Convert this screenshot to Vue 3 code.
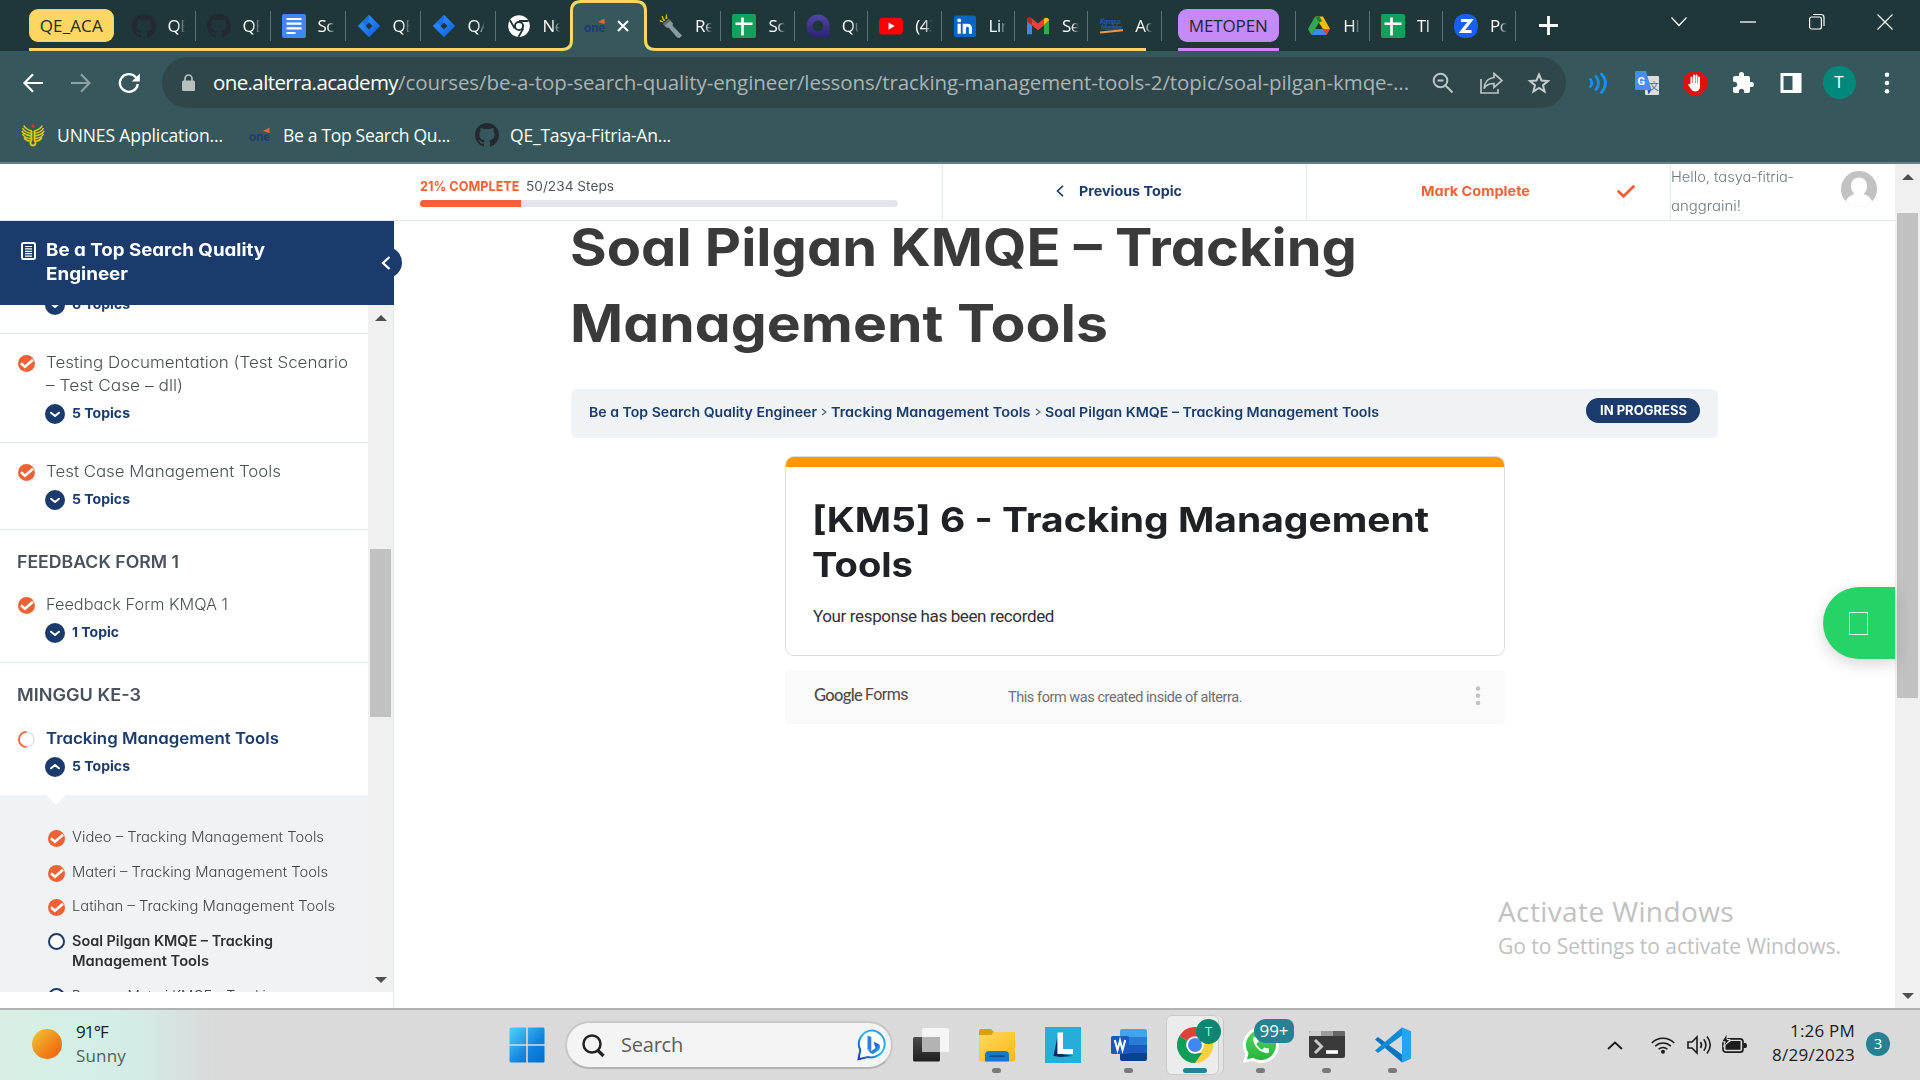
<script setup>
// Fits a line of text to a given width: by letter spacing, or with .wide by widening the glyphs.
const vFit = {
  mounted(el, { value, modifiers }) {
    const natural = el.getBoundingClientRect().width
    const count = el.textContent.length
    if (!count || !value || !natural) return
    if (modifiers.wide) {
      el.style.width = value + 'px'
      el.style.transformOrigin = '0 50%'
      el.style.transform = `scaleX(${value / natural})`
    } else {
      el.style.letterSpacing = (value - natural) / count + 'px'
    }
  },
}

const leftTabs = [
  { icon: 'github', text: 'QE_' },
  { icon: 'github', text: 'QE_' },
  { icon: 'docs', text: 'Scr' },
  { icon: 'jira', text: 'QE' },
  { icon: 'jira', text: 'QA' },
  { icon: 'chromemono', text: 'Ne' },
]
const midTabs = [
  { icon: 'torch', text: 'Re' },
  { icon: 'sheets', text: 'Sc' },
  { icon: 'qmark', text: 'Qu' },
  { icon: 'youtube', text: '(43' },
  { icon: 'linkedin', text: 'Lin' },
  { icon: 'gmail', text: 'Se' },
  { icon: 'kampus', text: 'Ac' },
]
const rightTabs = [
  { icon: 'drive', text: 'HI' },
  { icon: 'sheets', text: 'TI' },
  { icon: 'zoom', text: 'Po' },
]
const bookmarks = [
  { icon: 'unnes', text: 'UNNES Application...', w: 166 },
  { icon: 'one', text: 'Be a Top Search Qu...', w: 167 },
  { icon: 'github', text: 'QE_Tasya-Fitria-An...', w: 161 },
]
const topics = [
  { text: 'Video – Tracking Management Tools', w: 252 },
  { text: 'Materi – Tracking Management Tools', w: 256 },
  { text: 'Latihan – Tracking Management Tools', w: 263 },
]
const apps = [
  { icon: 'taskview' },
  { icon: 'folder', run: true },
  { icon: 'lapp' },
  { icon: 'word', run: true },
  { icon: 'chrome', active: true },
  { icon: 'whatsapp', run: true, badge: '99+' },
  { icon: 'terminal', run: true },
  { icon: 'vscode', run: true },
]
</script>

<template>
  <svg class="defs" width="0" height="0" aria-hidden="true">
    <defs>
      <linearGradient id="gSun" x1="0" y1="0" x2="1" y2="1"><stop offset=".1" stop-color="#efbe35" /><stop offset=".8" stop-color="#f26c0c" /></linearGradient>
      <linearGradient id="gWin" x1="0" y1="0" x2="1" y2="1"><stop offset="0" stop-color="#4fd3ff" /><stop offset=".6" stop-color="#1283dc" /><stop offset="1" stop-color="#0070cf" /></linearGradient>
      <linearGradient id="gBing" x1="1" y1="0" x2="0" y2="1"><stop offset="0" stop-color="#2f8fee" /><stop offset=".45" stop-color="#27bdf0" /><stop offset="1" stop-color="#1338b8" /></linearGradient>
      <linearGradient id="gB" x1="0" y1="0" x2="1" y2="1"><stop offset="0" stop-color="#2f8af0" /><stop offset=".5" stop-color="#1d63dd" /><stop offset="1" stop-color="#35d9e8" /></linearGradient>
      <linearGradient id="gFold" x1="0" y1="0" x2="1" y2="1"><stop offset="0" stop-color="#ffd863" /><stop offset="1" stop-color="#fcb913" /></linearGradient>
      <linearGradient id="gDark" x1="0" y1="0" x2="0" y2="1"><stop offset="0" stop-color="#4b4b4b" /><stop offset="1" stop-color="#1f1f1f" /></linearGradient>
      <linearGradient id="gQ" x1="0" y1="0" x2="0" y2="1"><stop offset="0" stop-color="#5246a8" /><stop offset="1" stop-color="#2b2273" /></linearGradient>
      <linearGradient id="gJ" x1="0" y1="0" x2="1" y2="1"><stop offset=".4" stop-color="#2684ff" /><stop offset="1" stop-color="#0d57cf" /></linearGradient>
      <linearGradient id="gWa" x1="0" y1="0" x2="0" y2="1"><stop offset="0" stop-color="#56d365" /><stop offset="1" stop-color="#25b63c" /></linearGradient>
    </defs>
    <symbol id="github" viewBox="0 0 16 16"><path fill="#24292f" d="M8 0C3.58 0 0 3.58 0 8c0 3.54 2.29 6.53 5.47 7.59.4.07.55-.17.55-.38 0-.19-.01-.82-.01-1.49-2.01.37-2.53-.49-2.69-.94-.09-.23-.48-.94-.82-1.13-.28-.15-.68-.52-.01-.53.63-.01 1.08.58 1.23.82.72 1.21 1.87.87 2.33.66.07-.52.28-.87.51-1.07-1.78-.2-3.64-.89-3.64-3.95 0-.87.31-1.59.82-2.15-.08-.2-.36-1.02.08-2.12 0 0 .67-.21 2.2.82a7.4 7.4 0 0 1 4 0c1.53-1.04 2.2-.82 2.2-.82.44 1.1.16 1.92.08 2.12.51.56.82 1.27.82 2.15 0 3.07-1.87 3.75-3.65 3.95.29.25.54.73.54 1.48 0 1.07-.01 1.93-.01 2.2 0 .21.15.46.55.38A8 8 0 0 0 16 8c0-4.42-3.58-8-8-8z" /></symbol>
    <symbol id="docs" viewBox="0 0 24 24"><rect width="24" height="24" rx="2" fill="#4285f4" /><path stroke="#fff" stroke-width="2.2" d="M4.500 5h15M4.500 9.700h15M4.500 14.400h15M4.500 19h9" /></symbol>
    <symbol id="jira" viewBox="0 0 24 24"><path fill="url(#gJ)" d="M12 .8 23.200 12 12 23.200.8 12z" /><path fill="#203739" d="M12 8.500 15.500 12 12 15.500 8.500 12z" /><path fill="#0d57cf" opacity=".5" d="M12 .8v4.500c-1.500 2-1.500 3 0 4L8.500 12 5 8z" /></symbol>
    <symbol id="chromemono" viewBox="0 0 24 24"><circle cx="12" cy="12" r="10.800" fill="#fff" /><circle cx="12" cy="12" r="4.100" fill="#fff" stroke="#203739" stroke-width="2" /><path d="M12 7h9.500M7.700 14.500 3 6.300M16.300 14.500 11.500 22.800" stroke="#203739" stroke-width="1.800" /></symbol>
    <symbol id="one" viewBox="0 0 24 24"><text x="1" y="17.500" font-family="Lato, sans-serif" font-weight="900" font-size="12.500" fill="#1f3c72">one</text><path fill="#f0643c" d="m15 8 6.500-3.500V10z" /><path d="M4 20h4" stroke="#32546b" stroke-width="1" /></symbol>
    <symbol id="torch" viewBox="0 0 24 24"><path fill="#8a98a2" d="m4 10 6-5 4 4.500-.500 2L23 21.500 20.500 24 18 23.500 10 14l-2.500-.500z" /><path fill="#5d6d78" d="m4 10 6-5 1.500 1.700-6 5z" /><path fill="#e9b32f" d="M1 6.200 4.200 8l-3.200-.6zM3 2l3 4.500L4.200 6.300zM7.500.5 8 4.700 6.700 4.500z" stroke="#e9b32f" stroke-width=".7" /></symbol>
    <symbol id="sheets" viewBox="0 0 24 24"><rect width="24" height="24" rx="2" fill="#12a05c" /><path stroke="#fff" stroke-width="2.600" d="M3.500 9.800h17M10.500 3.500v18" /></symbol>
    <symbol id="qmark" viewBox="0 0 24 24"><path fill="url(#gQ)" fill-rule="evenodd" d="M12 .5a11.500 11.500 0 0 1 11.500 11.500v11.500H12A11.500 11.500 0 0 1 12 .5zM12 6.500a5.500 5.500 0 1 0 0 11 5.500 5.500 0 0 0 0-11z" /></symbol>
    <symbol id="youtube" viewBox="0 0 24 24"><rect y="3.800" width="24" height="16.600" rx="4" fill="#f00" /><path fill="#fff" d="M9.500 8.500v7.200l6.200-3.600z" /></symbol>
    <symbol id="linkedin" viewBox="0 0 24 24"><rect x="1" y="1.500" width="22" height="21.500" rx="2" fill="#0a66c2" /><path stroke="#fff" stroke-width="3.200" d="M6.200 9.800v10M11.300 9.800v10" /><circle cx="6.200" cy="6.400" r="1.900" fill="#fff" /><path d="M11.300 14.500q0-3.300 3.200-3.300 2.900 0 2.900 3.300v5.300" fill="none" stroke="#fff" stroke-width="3" /></symbol>
    <symbol id="gmail" viewBox="0 0 24 24"><path fill="#4285f4" d="M1 7v13.200h5V11z" /><path fill="#34a853" d="M23 7v13.200h-5V11z" /><path fill="#ea4335" d="M1 6c0-2.500 3-3 4.500-1.800L12 9.500l6.500-5.300V11L12 16.200 1 7.500z" /><path fill="#fbbc04" d="M18 4.500C20 3 23 3.500 23 6.500L18 11z" /><path fill="#c5221f" d="M1 6.500c0-2.500 2.500-3.500 5-1.800V11L1 7.500z" /></symbol>
    <symbol id="kampus" viewBox="0 0 24 24"><text x="1" y="10" font-family="Lato, sans-serif" font-weight="700" font-style="italic" font-size="7" textLength="21" fill="#1c5da8">Kampus</text><text x="2" y="15.500" font-family="Lato, sans-serif" font-weight="700" font-style="italic" font-size="6.500" textLength="21" fill="#1c5da8">Merdeka</text><path d="M1 18.500 24 16.300" stroke="#e99b50" stroke-width="2" /></symbol>
    <symbol id="drive" viewBox="0 0 24 24"><path fill="#34a853" d="M8 2.500 1 15l3.500 6L12 8.500z" /><path fill="#fbbc04" d="M8 2.500h8L23 15h-7z" /><path fill="#4285f4" d="M7.800 15H16l4 6H4.500z" /><path fill="#ea4335" d="M16 15h7l-3.400 6z" /><path fill="#188038" d="m8 2.500 4 6.300L15 7 12.500 2.500z" /></symbol>
    <symbol id="zoom" viewBox="0 0 24 24"><rect width="24" height="24" rx="10.500" fill="#1660f5" /><path d="M7 6.500h9.500L8 17.500h9.500" fill="none" stroke="#fff" stroke-width="3.200" /></symbol>
    <symbol id="unnes" viewBox="0 0 24 24"><g fill="none" stroke="#dcc90e" stroke-width="1.500"><path d="M11 8C7 7 4 5.500 2.800 2.500M10.800 10.500C6 10 3 8 1.500 5M10.500 13C6 12.500 2.500 10.500.8 8M10 15.500c-4 0-7-1.500-8.500-4.500M9.500 18C7 18 4.500 17 3 14.500M13 8c4-1 7-2.500 8.200-5.500M13.200 10.500C18 10 21 8 22.500 5M13.500 13c4.500-.500 8-2.500 9.700-5M14 15.500c4 0 7-1.500 8.500-4.500M14.500 18c2.500 0 5-1 6.500-3.500" /><path stroke-width="1.900" d="M10.500 8v9c-2 3-1 5.500 1.500 5.500s3.500-2.500 1.500-5.500V8" /></g><circle cx="12" cy="2.800" r="1.600" fill="#e33" /></symbol>
    <symbol id="taskview" viewBox="0 0 36 36"><rect x="0" y="10" width="27" height="24.500" rx="1.500" fill="url(#gDark)" /><rect x="9" y="1" width="27" height="24" rx="1.500" fill="#fbfbfb" opacity=".8" /><path fill="#b3b3b3" d="M9 10h18v15H10.500Q9 25 9 23.500z" /></symbol>
    <symbol id="folder" viewBox="0 0 36 36"><path fill="#dd9f06" d="M0 4q0-2 2-2h10l3 3v6H0z" /><path fill="url(#gFold)" d="M0 8h12l3-3h20q1 0 1 1v27q0 1.500-1.500 1.500h-33Q0 34.500 0 33z" /><path fill="#1279cf" d="M6 34.500V28q0-4 4-4h16q4 0 4 4v6.500z" /><path d="M11 29.200h14" stroke="#0b4d92" stroke-width="1.800" stroke-linecap="round" /></symbol>
    <symbol id="lapp" viewBox="0 0 36 36"><path fill="#25aeda" d="M0 0h36v36H0z" /><path fill="#0e2c5d" d="m12.500 9-4 20 7 1 12-1-15-3z" /><path fill="#fff" d="M12.500 5.500H18V22h10v5H12.500z" /></symbol>
    <symbol id="word" viewBox="0 0 36 36"><path fill="#41a5ee" d="M9 4q0-2 2-2h23q2 0 2 2v6H9z" /><path fill="#2b7cd3" d="M9 10h27v8H9z" /><path fill="#185abd" d="M9 18h27v8H9z" /><path fill="#103f91" d="M9 26h27v6q0 2-2 2H11q-2 0-2-2z" /><rect y="9" width="18" height="18" rx="1.500" fill="#185abd" /><path d="m3.800 13 2.700 10L9 13.500 11.500 23l2.700-10" fill="none" stroke="#fff" stroke-width="2" /></symbol>
    <symbol id="chrome" viewBox="0 0 36 36"><path fill="#db4437" d="M18 18 2.400 9A18 18 0 0 1 33.600 9z" /><path fill="#0f9d58" d="M18 18v18A18 18 0 0 1 2.400 9z" /><path fill="#ffcd40" d="M18 10h16.100A18 18 0 0 1 18 36l7-14z" /><path fill="#0f9d58" d="m11 22 7 4h7l-7 10-5-1z" /><circle cx="18" cy="18" r="8.800" fill="#fff" /><circle cx="18" cy="18" r="7" fill="#4285f4" /></symbol>
    <symbol id="whatsapp" viewBox="0 0 36 36"><path fill="#fff" d="M18 0a18 18 0 1 1-8.600 33.800L0 36l2.300-9.200A18 18 0 0 1 18 0z" /><path fill="url(#gWa)" d="M18 3a15 15 0 1 1-8 27.700L4 32.300l1.500-6A15 15 0 0 1 18 3z" /><path fill="#fff" transform="translate(7.500 7.500) scale(.88)" d="M6.620 10.790c1.440 2.830 3.760 5.140 6.590 6.590l2.200-2.200c.27-.27.67-.36 1.020-.24 1.120.37 2.330.57 3.570.57.550 0 1 .45 1 1V20c0 .55-.45 1-1 1-9.390 0-17-7.610-17-17 0-.55.45-1 1-1h3.500c.55 0 1 .45 1 1 0 1.250.2 2.450.57 3.570.11.35.03.74-.25 1.020z" /></symbol>
    <symbol id="terminal" viewBox="0 0 36 36"><rect y="4" width="36" height="27" rx="2" fill="#3a3a3a" /><path fill="#cfcfcf" d="M0 9V6q0-2 2-2h10v5z" /><path fill="#9d9d9d" d="M12 4h12v5H12z" /><path fill="#666" d="M24 4h10q2 0 2 2v3H24z" /><path d="m6 13 6.500 6.500L6 26" fill="none" stroke="#c9c9c9" stroke-width="3" /><path d="M17 25h12" stroke="#fff" stroke-width="3.600" /></symbol>
    <symbol id="vscode" viewBox="0 0 36 36"><path fill="#0b74c0" d="m0 12.500 3-2.500 24 17.500v8z" /><path fill="#0f8ad6" d="m0 23.500 3 2.500L27 8.500V.5z" /><path fill="#27a3f2" d="m27 .3 9 4v27.400l-9 4z" /></symbol>
    <symbol id="check" viewBox="0 0 17 17"><circle cx="8.500" cy="8.500" r="8.500" fill="#f06235" /><path d="m3 8.300 3.900 3.500L15 4.700" fill="none" stroke="#fff" stroke-width="2.600" /></symbol>
    <symbol id="down" viewBox="0 0 20 20"><circle cx="10" cy="10" r="10" fill="#1b3b6c" /><path d="m6 8.700 4 3.300 4-3.300" fill="none" stroke="#fff" stroke-width="2" stroke-linecap="round" stroke-linejoin="round" /></symbol>
  </svg>

  <div class="screen">
    <header class="tabs">
      <svg class="outline" width="1920" height="51">
        <path fill="#36585c" d="M560 51q11-1 11-10V11q0-9 9-9h57q9 0 9 9v30q0 9 10 10z" />
        <path fill="none" stroke="#fdd663" stroke-width="3" d="M29 49.500H562q9.500 0 9.500-9.500V11q0-9.500 9.500-9.500h55q9.500 0 9.500 9.500V40q0 9.500 9.500 9.500H1146" />
        <path stroke="#c58af9" stroke-width="3" d="M1178 49.500h101" />
      </svg>
      <div class="chip yellow"><span v-fit="63">QE_ACA</span></div>
      <div v-for="(t, i) in leftTabs" :key="'l' + i" class="tab" :class="{ last: i === 5 }">
        <svg class="fav"><use :href="'#' + t.icon" /></svg><span class="tt">{{ t.text }}</span>
      </div>
      <div class="tab active">
        <svg class="fav"><use href="#one" /></svg>
        <svg class="x" width="12" height="12"><path d="m1 1 10 10M11 1 1 11" stroke="#fff" stroke-width="2" /></svg>
      </div>
      <div v-for="(t, i) in midTabs" :key="'m' + i" class="tab slim">
        <svg class="fav"><use :href="'#' + t.icon" /></svg><span class="tt">{{ t.text }}</span>
      </div>
      <div class="chip purple"><span v-fit="79">METOPEN</span></div>
      <i class="sep"></i>
      <div v-for="(t, i) in rightTabs" :key="'r' + i" class="tab slim">
        <svg class="fav"><use :href="'#' + t.icon" /></svg><span class="tt">{{ t.text }}</span>
      </div>
      <svg class="plus" width="19" height="19"><path d="M9.500 0v19M0 9.500h19" stroke="#fff" stroke-width="2.800" /></svg>
      <div class="wins">
        <svg width="16" height="18" fill="none" stroke="#fff" stroke-width="1.200"><path d="m.5 4.500 7.500 8 7.500-8" /></svg>
        <svg width="16" height="18" fill="none" stroke="#fff" stroke-width="1.300"><path d="M0 9h16" /></svg>
        <svg width="16" height="18" fill="none" stroke="#fff" stroke-width="1.200"><rect x=".6" y="4" width="11.800" height="12" rx="2" /><path d="M4 1.500h8q3 0 3 3v8.500" /></svg>
        <svg width="16" height="18" fill="none" stroke="#fff" stroke-width="1.200"><path d="m.5 1.500 15 15M15.500 1.500l-15 15" /></svg>
      </div>
    </header>

    <div class="toolbar">
      <svg width="20" height="20" fill="none" stroke="#fff" stroke-width="2.200"><path d="M20 10H2M10 1.200 1.500 10l8.500 8.800" /></svg>
      <svg width="20" height="20" fill="none" stroke="#8fa3a5" stroke-width="2"><path d="M0 10h18M10 1.200l8.500 8.800-8.500 8.800" /></svg>
      <svg width="22" height="22" fill="none" stroke="#fff" stroke-width="2.300"><path d="M18.800 12A9 8.800 0 1 1 16.500 5L19 7.500" /><path d="M20.800 1.500v8h-8z" fill="#fff" stroke="none" /></svg>
      <div class="omni">
        <svg class="lock" width="13" height="17"><path d="M3 8V4.500a3.500 3.500 0 0 1 7 0V8" fill="none" stroke="#b7bfc1" stroke-width="1.700" /><rect y="6.500" width="13" height="10.500" rx="1.500" fill="#b7bfc1" /></svg>
        <span v-fit="185" class="dom">one.alterra.academy</span><span v-fit="1011" class="path">/courses/be-a-top-search-quality-engineer/lessons/tracking-management-tools-2/topic/soal-pilgan-kmqe-...</span>
        <div class="omni-icons">
          <svg width="22" height="22" fill="none" stroke="#bcc4c5" stroke-width="2"><circle cx="8.500" cy="8.500" r="6.800" /><path d="M5.500 8.500h6M13.500 13.500l7 7" /></svg>
          <svg width="24" height="24" fill="none" stroke="#bcc4c5" stroke-width="1.700"><path d="M2 8v14h17v-4" /><path d="M15 2.500 23 9.500l-8 7v-4c-5 0-8 1.500-10 5 .5-6 4-10.500 10-11z" /></svg>
          <svg width="22" height="22" fill="none" stroke="#c6cdce" stroke-width="2"><path d="m11 2.500 2.500 6 6.500.5-5 4.200 1.600 6.300L11 16l-5.600 3.500L7 13.200 2 9l6.500-.5z" /></svg>
        </div>
      </div>
      <div class="exts">
        <svg width="24" height="24" fill="none" stroke="#1590f5" stroke-width="2.800" stroke-linecap="round"><path d="M3.500 8.500q2.500 3.500 0 7M9 5.500q5 6.500 0 13M14.500 3q8 9 0 18.500" /></svg>
        <svg width="24" height="24"><rect x="10" y="5" width="14" height="19" rx="1" fill="#dcdfe2" /><path fill="#4c8bf5" d="M0 1.500Q0 0 1.500 0H11l5.500 19H1.500Q0 19 0 17.500z" /><path fill="#2c4fc0" d="M12.500 19h4l-3 4.500z" /><text x="2.500" y="14" font-size="11" font-weight="700" font-family="Roboto, sans-serif" fill="#fff">G</text><text x="14" y="19" font-size="10" font-family="'Noto Sans CJK SC', sans-serif" fill="#54707a">文</text></svg>
        <svg width="24" height="24"><path fill="#e20f0f" d="M7 0h10l7 7v10l-7 7H7l-7-7V7z" /><path d="M8.500 14V6.500M11 13V4.500M13.500 13V4.500M16 13V6.500" stroke="#fff" stroke-width="2" stroke-linecap="round" /><path fill="#fff" d="M7.500 12H17v3q0 5-4.500 5.500-3 0-4.500-2.500L5 13.500q1-1 2.500.5z" /></svg>
        <svg width="24" height="24" viewBox="0 0 24 24"><path fill="#fff" d="M20.500 11H19V7c0-1.100-.9-2-2-2h-4V3.500a2.500 2.500 0 0 0-5 0V5H4c-1.100 0-1.990.9-1.990 2v3.800H3.500c1.490 0 2.700 1.210 2.700 2.700s-1.210 2.700-2.700 2.700H2V20c0 1.100.9 2 2 2h3.800v-1.500c0-1.490 1.210-2.700 2.700-2.700s2.700 1.210 2.700 2.700V22H17c1.100 0 2-.9 2-2v-4h1.500a2.500 2.500 0 0 0 0-5z" /></svg>
        <svg width="24" height="24"><path fill="#fff" fill-rule="evenodd" d="M1.500 2h21v20h-21zM4.500 5v14h9V5z" /></svg>
        <div class="profile">T</div>
        <svg width="24" height="24" fill="#fff"><circle cx="12" cy="3.800" r="2.300" /><circle cx="12" cy="12" r="2.300" /><circle cx="12" cy="20.200" r="2.300" /></svg>
      </div>
    </div>

    <nav class="marks">
      <div v-for="b in bookmarks" :key="b.text" class="mark">
        <svg class="fav"><use :href="'#' + b.icon" /></svg><span v-fit="b.w">{{ b.text }}</span>
      </div>
    </nav>

    <div class="page">
      <div class="view">
        <div class="top">
          <div class="prog">
            <div class="steps"><b v-fit.wide="99.5">21% COMPLETE</b><span v-fit.wide="88">50/234 Steps</span></div>
            <div class="bar"><div class="fill"></div></div>
          </div>
          <div class="cell prev">
            <svg width="8" height="12"><path d="M7 .8 1.500 6 7 11.200" fill="none" stroke="#1b3b6c" stroke-width="1.600" /></svg>
            <b v-fit.wide="103">Previous Topic</b>
          </div>
          <div class="cell done">
            <b v-fit.wide="109">Mark Complete</b>
            <svg width="18" height="13"><path d="m1.500 6.500 5 4.700L16.500 1.500" fill="none" stroke="#f06235" stroke-width="2.900" stroke-linecap="round" /></svg>
          </div>
          <div class="cell hello">
            <div><span v-fit.wide="123">Hello, tasya-fitria-</span><span v-fit.wide="70">anggraini!</span></div>
            <svg width="36" height="36"><clipPath id="av"><circle cx="18" cy="18" r="18" /></clipPath><g clip-path="url(#av)"><path fill="#c2c2c2" d="M0 0h36v36H0z" /><path fill="#fff" d="M18 6.500c5 0 8 3.500 8 8.500 0 4-1.500 6-3.500 8 6 1.500 9.500 6 10 13h-29c.5-7 4-11.500 10-13-2-2-3.500-4-3.500-8 0-5 3-8.500 8-8.500z" /></g></svg>
          </div>
        </div>

        <div class="body">
          <aside class="side">
            <div class="course">
              <svg width="15" height="18" fill="none" stroke="#fff"><rect x="1" y="1" width="13" height="16" rx="1.500" stroke-width="2" /><path stroke-width="1.200" d="M4 4.500h7M4 6.900h7M4 9.300h7M4 11.700h7M4 14.100h7" /></svg>
              <div><b v-fit.wide="219">Be a Top Search Quality</b><b v-fit.wide="82">Engineer</b></div>
              <div class="knob"><svg width="10" height="16"><path d="M8.500 2 2 8l6.500 6" fill="none" stroke="#fff" stroke-width="2.300" /></svg></div>
            </div>
            <div class="listwrap">
              <div class="list">
                <div class="item first">
                  <div class="toggle"><svg><use href="#down" /></svg><b v-fit.wide="58">6 Topics</b></div>
                </div>
                <div class="item">
                  <div class="lesson"><svg><use href="#check" /></svg><div><span v-fit.wide="302">Testing Documentation (Test Scenario</span><span v-fit.wide="137">– Test Case – dll)</span></div></div>
                  <div class="toggle"><svg><use href="#down" /></svg><b v-fit.wide="58">5 Topics</b></div>
                </div>
                <div class="item roomy">
                  <div class="lesson"><svg><use href="#check" /></svg><span v-fit.wide="235">Test Case Management Tools</span></div>
                  <div class="toggle"><svg><use href="#down" /></svg><b v-fit.wide="58">5 Topics</b></div>
                </div>
                <div class="item sect roomy">
                  <h3><span v-fit.wide="162">FEEDBACK FORM 1</span></h3>
                  <div class="lesson"><svg><use href="#check" /></svg><span v-fit.wide="182">Feedback Form KMQA 1</span></div>
                  <div class="toggle"><svg><use href="#down" /></svg><b v-fit.wide="47">1 Topic</b></div>
                </div>
                <div class="item sect open">
                  <h3><span v-fit.wide="124">MINGGU KE-3</span></h3>
                  <div class="lesson current"><svg viewBox="0 0 17 17" fill="none" stroke-width="1.800"><path stroke="#e2e7ed" d="M8.500.9a7.600 7.600 0 0 1 0 15.200" /><path stroke="#f06235" d="M8.500 16.100a7.600 7.600 0 0 1 0-15.200" /></svg><b v-fit.wide="233">Tracking Management Tools</b></div>
                  <div class="toggle up"><svg><use href="#down" /></svg><b v-fit.wide="58">5 Topics</b></div>
                </div>
                <div class="topics">
                  <i class="notch"></i>
                  <div v-for="t in topics" :key="t.text" class="topic"><svg><use href="#check" /></svg><span v-fit.wide="t.w">{{ t.text }}</span></div>
                  <div class="topic now"><i class="ring"></i><div><b v-fit.wide="201">Soal Pilgan KMQE – Tracking</b><b v-fit.wide="137">Management Tools</b></div></div>
                  <div class="topic"><i class="ring"></i><span v-fit.wide="210">Resume Materi KMQE – Tracking</span></div>
                </div>
              </div>
              <div class="scroll side-scroll"><i class="au"></i><div class="thumb"></div><i class="ad"></i></div>
            </div>
          </aside>

          <main class="main">
            <h1><span v-fit.wide="787">Soal Pilgan KMQE – Tracking</span><span v-fit.wide="538">Management Tools</span></h1>
            <div class="crumbs">
              <b v-fit.wide="228">Be a Top Search Quality Engineer</b>
              <svg width="6" height="8"><path d="m1 1 4 3-4 3" fill="none" stroke="#555f68" stroke-width="1.200" /></svg>
              <b v-fit.wide="199.500">Tracking Management Tools</b>
              <svg width="6" height="8"><path d="m1 1 4 3-4 3" fill="none" stroke="#555f68" stroke-width="1.200" /></svg>
              <b v-fit.wide="334">Soal Pilgan KMQE – Tracking Management Tools</b>
              <div class="status"><b v-fit.wide="87">IN PROGRESS</b></div>
            </div>
            <section class="form">
              <div class="stripe"></div>
              <h2><span v-fit.wide="617">[KM5] 6 - Tracking Management</span><span v-fit.wide="101">Tools</span></h2>
              <p><span v-fit="241">Your response has been recorded</span></p>
            </section>
            <footer class="gf">
              <span v-fit="48" class="goo">Google</span><span v-fit="43" class="frm">Forms</span>
              <span v-fit="234" class="made">This form was created inside of alterra.</span>
              <svg width="6" height="20" fill="#c3c3c3"><circle cx="3" cy="2.500" r="2.300" /><circle cx="3" cy="9.800" r="2.300" /><circle cx="3" cy="17" r="2.300" /></svg>
            </footer>
            <div class="wa"><i></i></div>
            <div class="activate"><span v-fit="236" class="a1">Activate Windows</span><span v-fit="343" class="a2">Go to Settings to activate Windows.</span></div>
          </main>
        </div>
      </div>
      <div class="scroll page-scroll"><i class="au"></i><div class="thumb"></div><i class="ad"></i></div>
    </div>

    <div class="taskbar">
      <div class="weather">
        <svg width="30" height="30"><circle cx="15" cy="15" r="15" fill="url(#gSun)" /></svg>
        <div><span v-fit="32">91°F</span><span v-fit="50" class="sunny">Sunny</span></div>
      </div>
      <svg class="start" width="36" height="36" fill="url(#gWin)"><path d="M.5 2q0-1.500 1.500-1.500h32.500q1 0 1 1.500v32q0 1.500-1 1.500H2Q.5 35.500.5 34z" /><path d="M18 0v36M0 18h36" stroke="#dadada" stroke-width="1.600" /></svg>
      <div class="search">
        <svg width="23" height="23" fill="none" stroke="#222" stroke-width="2.500"><circle cx="10" cy="10" r="8.500" /><path d="m15.500 16 6 6" stroke-width="3.200" /></svg>
        <span v-fit="62">Search</span>
        <svg class="bing" width="31" height="32" viewBox="0 0 31 32"><path d="M16 1.500a13.500 13.500 0 1 1-5 26.500L1.500 30.200 3.300 21A13.500 13.500 0 0 1 16 1.500z" fill="#fff" stroke="url(#gBing)" stroke-width="2" /><path fill="#2d7deb" d="m10.500 6.500 3.800 1.600v14l-3.800-2z" /><path fill="url(#gB)" d="m16.500 12.500 6 3q1.500 4-1.500 6.500l-5 3q-3-.5-5.500-5l3.800 2.200 4.200-3.200z" /></svg>
      </div>
      <div v-for="a in apps" :key="a.icon" class="app" :class="{ on: a.active }">
        <svg width="36" height="36"><use :href="'#' + a.icon" /></svg>
        <i v-if="a.run || a.active" class="dot"></i>
        <span v-if="a.active" class="tb">T</span>
        <span v-if="a.badge" class="wb">{{ a.badge }}</span>
      </div>
      <div class="tray">
        <svg class="t1" width="16" height="9"><path d="m1 8 7-6.500L15 8" fill="none" stroke="#1c1c1c" stroke-width="1.800" /></svg>
        <svg class="t2" width="24" height="18" fill="none" stroke="#1c1c1c" stroke-width="1.600"><path d="M.8 7a15.500 15.500 0 0 1 22.400 0M4.200 10.200a11 11 0 0 1 15.600 0M7.600 13.300a6.300 6.300 0 0 1 8.800 0" /><circle cx="12" cy="15.800" r="2" fill="#1c1c1c" stroke="none" /></svg>
        <svg class="t3" width="25" height="20" fill="none" stroke="#1c1c1c" stroke-width="1.600"><path d="M1 7h4l5-5v16l-5-5H1zM13.500 7q2 3 0 6M16.800 4.300q4.200 5.700 0 11.400M20 1.500q6.500 8.500 0 17" /></svg>
        <svg class="t4" width="25" height="20"><rect x="1" y="4.800" width="20" height="13.400" rx="3" fill="none" stroke="#1c1c1c" stroke-width="1.700" /><path fill="#1c1c1c" d="M3.500 15.700V11L9 7h9.500v8.700zM21.500 9h2q1.500 0 1.500 2.500t-1.500 2.500h-2z" /><path fill="#1c1c1c" stroke="#dadada" stroke-width="1" d="M5-.5-.3 7.800h3.500L1.500 13 8 5.500H5z" /></svg>
        <div class="clock"><span v-fit="65">1:26 PM</span><span v-fit="83">8/29/2023</span></div>
        <div class="count">3</div>
      </div>
    </div>
  </div>
</template>

<style>
body { margin: 0; background: #fff; overflow: hidden; }
</style>

<style scoped>
* { box-sizing: border-box; }
.defs { position: absolute; }
.screen { width: 1920px; height: 1080px; display: flex; flex-direction: column; overflow: hidden; font-family: "Open Sans", "Noto Sans", sans-serif; white-space: nowrap; }
svg { flex: none; display: block; overflow: visible; }
span, b { flex: none; }
.fav { width: 24px; height: 24px; }

.tabs { position: relative; height: 51px; flex: none; background: #203739; display: flex; align-items: center; padding-left: 29px; color: #fff; font-size: 17px; }
.outline { position: absolute; left: 0; top: 0; }
.chip { height: 33px; border-radius: 9px; display: flex; align-items: center; justify-content: center; color: #23282c; flex: none; }
.yellow { width: 84.5px; background: #fdd663; margin-right: 7px; }
.purple { width: 101px; background: #c58af9; margin-left: 16px; }
.tab { position: relative; width: 75px; height: 30px; border-right: 1.500px solid #5d7072; display: flex; align-items: center; padding-left: 11px; flex: none; }
.tab.last, .tab.active { border-color: transparent; }
.tab.slim { width: 73.4px; }
.tt { width: 17px; margin-left: 12px; overflow: hidden; letter-spacing: -.5px; -webkit-mask-image: linear-gradient(90deg, #000 55%, transparent); mask-image: linear-gradient(90deg, #000 55%, transparent); }
.tab.active { width: 77.5px; padding-left: 12px; gap: 10px; }
.sep { width: 17.500px; height: 30px; border-right: 1.500px solid #5d7072; }
.plus { margin-left: 23px; }
.wins { display: flex; gap: 52.600px; margin-left: 113px; margin-bottom: 7px; }

.toolbar { height: 63px; flex: none; background: #36585c; display: flex; align-items: center; padding: 0 0 0 23px; }
.toolbar > svg { margin-right: 28px; }
.toolbar > svg:nth-of-type(3) { margin-right: 21px; }
.omni { width: 1404px; height: 51px; border-radius: 26px; background: #2f464a; display: flex; align-items: center; padding-left: 20px; font-size: 20.500px; color: #fff; }
.lock { margin-right: 18px; }
.dom { line-height: 48px; margin-top: -1px; }
.path { color: #a9b4b5; margin-top: -1px; }
.omni-icons { display: flex; align-items: center; gap: 25px; margin-left: 22.500px; }
.exts { display: flex; align-items: center; gap: 24px; margin-left: 21px; }
.profile { width: 33px; height: 33px; border-radius: 50%; background: #00897b; color: #fff; font-size: 17px; line-height: 32px; text-align: center; margin: 0 -4.500px; }

.marks { height: 50px; flex: none; background: #36585c; border-bottom: 2px solid #638486; display: flex; color: #fff; font-size: 17.500px; }
.mark { display: flex; align-items: center; height: 42px; padding-left: 21px; margin-right: 4px; }
.mark .fav { margin-right: 12px; }
.mark + .mark .fav { margin-right: 11px; }
.mark span { margin-top: -1px; }

.page { height: 844px; flex: none; display: flex; background: #fff; font-family: Inter, "Open Sans", sans-serif; font-feature-settings: "cv11"; }
.view { width: 1895px; display: flex; flex-direction: column; }
.top { position: relative; z-index: 2; height: 57px; flex: none; border-bottom: 1px solid #e2e7ed; background: #fff; display: flex; padding-left: 420px; font-size: 13.500px; }
.prog { width: 522px; padding-top: 12px; }
.steps { height: 20px; line-height: 20px; display: flex; gap: 6px; color: #4f5661; }
.steps b { color: #f06235; }
.bar { width: 478px; height: 7px; margin-top: 4px; border-radius: 4px; background: #e2e5ec; overflow: hidden; }
.fill { width: 101px; height: 7px; background: #f06235; }
.cell { border-left: 1px solid #e2e7ed; height: 56px; display: flex; align-items: center; }
.prev { width: 364px; padding: 0 0 2px 113px; gap: 15px; color: #1b3b6c; }
.done { width: 364px; padding: 0 0 2px 114px; color: #f06235; }
.done svg { margin-left: 87px; }
.hello { width: 225px; color: #6c7a80; font-weight: 300; font-size: 14px; }
.hello > div { width: 170px; margin-top: -2px; }
.hello span { display: table; line-height: 29px; }
.hello svg { margin-bottom: 7px; }

.body { display: flex; height: 787px; }
.side { width: 394px; border-right: 1px solid #e2e7ed; position: relative; z-index: 1; }
.course { position: relative; width: 394px; height: 84px; background: #1b3b6c; color: #fff; display: flex; padding: 17px 0 0 21px; font-size: 17.500px; }
.course > svg { margin: 4px 10px 0 0; }
.course b { display: table; line-height: 24px; }
.knob { position: absolute; left: 371px; top: 26px; width: 31px; height: 31px; border-radius: 50%; background: #1b3b6c; display: flex; align-items: center; padding-left: 10px; }
.listwrap { display: flex; height: 687px; overflow: hidden; }
.list { width: 368px; }
.item { padding: 17px 0 16px 18px; border-bottom: 1px solid #e2e7ed; }
.item.roomy { padding-bottom: 17px; }
.item.first { margin-top: -12px; padding-top: 0; }
.item.sect { padding-top: 20px; }
.open { border-bottom: 0; }
h3 { margin: 0 0 19px; height: 24px; font-size: 17px; line-height: 24px; font-weight: 600; color: #4b515c; }
h3 span { display: inline-block; margin-left: -1px; }
.open h3 { margin-bottom: 20px; }
.lesson { display: flex; line-height: 23px; font-size: 16px; font-weight: 300; color: #4a5052; }
.lesson span { display: table; }
.lesson svg { width: 17px; height: 17px; margin: 4px 11px 0 0; }
.current b { color: #1b3b6c; font-weight: 600; }
.toggle { display: flex; align-items: center; height: 24px; margin: 5px 0 0 27px; color: #1b3b6c; font-size: 13.500px; }
.first .toggle { margin-top: 0; }
.toggle b { margin-top: -2px; }
.toggle svg { width: 20px; height: 20px; margin-right: 7px; }
.up svg { transform: rotate(180deg); }
.topics { position: relative; height: 210px; background: #eff3f6; padding: 32px 0 0 48px; font-size: 14px; color: #40464a; font-weight: 300; }
.notch { position: absolute; left: 46px; top: 0; border: 10px solid transparent; border-top-color: #fff; border-bottom: 0; }
.topic { display: flex; line-height: 20.500px; margin-bottom: 14px; }
.topic svg { width: 17px; height: 17px; margin: 3px 7px 0 0; }
.topic b { display: table; font-weight: 600; color: #2c3135; }
.ring { width: 17px; height: 17px; flex: none; margin: 2px 7px 0 0; border: 2px solid #1b3b6c; border-radius: 50%; background: #fff; }
.scroll { width: 25px; background: #f0f0f0; display: flex; flex-direction: column; align-items: center; flex: none; }
.au { border: 6px solid transparent; border-bottom-color: #505050; border-top: 0; margin-top: 10px; }
.ad { border: 6px solid transparent; border-top-color: #505050; border-bottom: 0; margin-top: auto; margin-bottom: 9px; }
.thumb { width: 21px; background: #c1c1c1; }
.side-scroll .thumb { height: 168px; margin-top: 228px; }
.page-scroll .thumb { height: 485px; margin-top: 33px; }

.main { position: relative; width: 1501px; padding-left: 177px; margin-top: -11px; height: 798px; }
h1 { margin: 0 0 27px -1px; font-size: 52px; line-height: 76px; font-weight: 700; color: #3a3a3a; }
h1 span { display: table; }
.crumbs { width: 1147px; height: 49px; border-radius: 6px; background: #eff3f6; display: flex; align-items: center; padding: 0 18px 3px; font-size: 13.200px; color: #1b3b6c; gap: 4px; }
.crumbs b { font-weight: 600; }
.status { height: 25px; width: 114px; border-radius: 13px; background: #1b3b6c; color: #fff; font-size: 12.500px; display: flex; align-items: center; justify-content: center; margin: -3px 0 0 auto; }
.crumbs .status b { font-weight: 700; }
.form { width: 720px; height: 200px; margin: 18px 0 14px 214px; border: 1px solid #dadce0; border-radius: 9px; overflow: hidden; color: #202124; }
.stripe { height: 11px; background: #ff9800; margin: -1px -1px 0; }
h2 { margin: 31px 0 0 26px; font-size: 33.500px; line-height: 45px; font-weight: 700; font-feature-settings: normal; }
h2 span { display: table; }
.form p { margin: 16px 0 0 27px; font: 17px/24px Roboto, sans-serif; color: #303134; }
.gf { width: 720px; height: 54px; margin-left: 214px; background: #fafafa; border-radius: 4px; display: flex; padding-left: 29px; font-family: Roboto, sans-serif; font-feature-settings: normal; color: #4a4a4a; }
.goo { font: 500 16.500px/50px Lato, sans-serif; }
.frm { font-size: 16px; line-height: 50px; margin-left: 3px; }
.made { font-size: 14.500px; line-height: 55px; margin-left: 100px; color: #707070; }
.gf svg { margin: 16px 0 0 233px; }
.wa { position: absolute; right: 0; top: 377px; width: 72px; height: 72px; border-radius: 36px 0 0 36px; background: #25d366; box-shadow: 0 5px 16px rgba(0, 0, 0, .16); display: flex; align-items: center; padding-left: 26px; }
.wa i { width: 19px; height: 23px; border: 1.500px solid #d9f8e4; }
.activate { position: absolute; left: 1104px; top: 680px; color: #c1c1c1; font-family: "Open Sans", sans-serif; font-feature-settings: normal; }
.activate span { display: table; }
.a1 { font-size: 28px; line-height: 42px; }
.a2 { font-size: 21px; line-height: 28px; }

.taskbar { position: relative; height: 72px; flex: none; border-top: 2px solid #b1b3b3; background: linear-gradient(90deg, #d9efe4 0, #d3efe7 90px, #d4ebe6 140px, #dadada 215px); display: flex; align-items: center; font-size: 17px; color: #1c1c1c; }
.weather { width: 509px; padding-left: 32px; display: flex; align-items: center; gap: 14px; margin-top: -3px; }
.weather > svg { margin-top: 1px; }
.weather span, .clock span { display: table; line-height: 24px; }
.sunny { color: #555c5c; }
.start { margin-right: 20px; }
.search { width: 328px; height: 48px; border: 2px solid #c8c8c8; border-bottom-color: #b4b4b4; border-radius: 24px; background: #f4f4f4; display: flex; align-items: center; padding-left: 15px; font-size: 20px; color: #5c5c5c; margin-right: 5px; }
.search span { margin: -1px 0 0 16px; }
.bing { margin-left: 174px; }
.app { position: relative; width: 66px; height: 70px; display: flex; align-items: center; justify-content: center; flex: none; }
.app svg { position: relative; }
.app.on::before { content: ""; position: absolute; left: 4px; top: 5px; width: 51px; height: 58px; border-radius: 6px; background: #ececec; border: 1px solid #c9c9c9; box-shadow: 5px 0 0 -1px #e4e4e4, 6px 0 0 -1px #c6c6c6; }
.dot { position: absolute; left: 28px; top: 58px; width: 9px; height: 5px; border-radius: 3px; background: #7a7a7a; }
.on .dot { left: 21px; width: 24px; background: #268293; }
.tb { position: absolute; left: 34px; top: 9px; width: 25px; height: 25px; border-radius: 50%; background: #0b8574; color: #bfe6df; font-size: 13px; line-height: 24px; text-align: center; }
.wb { position: absolute; left: 26px; top: 9px; width: 40px; height: 24px; border-radius: 12px 8px 8px 12px; background: #268293; color: #fff; font-size: 17px; line-height: 23px; text-align: center; }
.tray { display: flex; align-items: center; margin-left: auto; padding-right: 30px; }
.t1 { margin-right: 28px; }
.t2 { margin-right: 12px; }
.t3 { margin-right: 10px; }
.t4 { margin: 0 25px 2px 0; }
.clock { display: flex; flex-direction: column; align-items: flex-end; margin-top: -4px; }
.count { width: 24px; height: 24px; border-radius: 50%; background: #268293; color: #fff; font-size: 15px; line-height: 23px; text-align: center; margin: -2px 0 0 11px; }
</style>
